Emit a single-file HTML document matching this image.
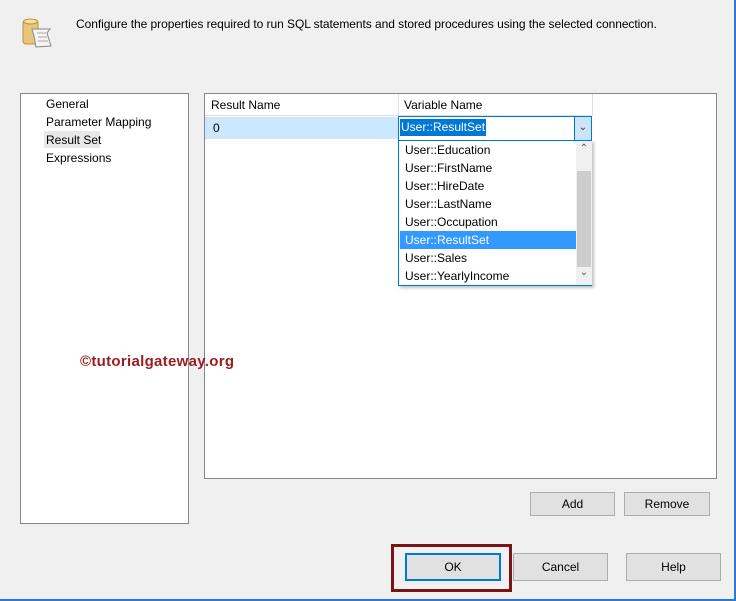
<!DOCTYPE html>
<html><head><style>
*{margin:0;padding:0;box-sizing:border-box}
body{width:736px;height:601px;background:#f0f0f0;font-family:"Liberation Sans",sans-serif;font-size:12px;color:#000;position:relative;overflow:hidden}
.a{position:absolute}
.btn{position:absolute;background:#e1e1e1;border:1px solid #adadad;text-align:center;font-size:12px}
.it{position:absolute;left:5px;height:18px;line-height:18px;width:172px;padding-left:1px}
</style></head><body>
<div class="a" style="right:0;top:0;width:2px;height:601px;background:#2b79d0"></div>
<div class="a" style="left:0;bottom:0;width:736px;height:2px;background:#2b79d0"></div>
<svg class="a" style="left:22px;top:18px" width="32" height="32" viewBox="0 0 32 32">
<rect x="1" y="2" width="15" height="24" rx="3" fill="#e8c679" stroke="#b8923e"/>
<ellipse cx="8.5" cy="3.5" rx="7" ry="2.5" fill="#f5dea0" stroke="#b8923e"/>
<path d="M10 11 L28 11 L25 15 L29 28 L14 29 L12 18 Z" fill="#f4f4f4" stroke="#888"/>
<path d="M15 15 L24 15 M16 19 L25 19 M16 23 L26 23" stroke="#aaa"/>
</svg>
<div class="a" style="left:76px;top:17px;font-size:12px;letter-spacing:-0.06px">Configure the properties required to run SQL statements and stored procedures using the selected connection.</div>
<div class="a" style="left:20px;top:93px;width:169px;height:431px;background:#fff;border:1px solid #828790"></div>
<div class="a" style="left:44px;top:131px;width:56px;height:17px;background:#e8e8e8"></div>
<div class="a" style="left:46px;top:95px;line-height:18px">General<br>Parameter Mapping<br>Result Set<br>Expressions</div>
<div class="a" style="left:204px;top:93px;width:513px;height:386px;background:#fff;border:1px solid #828790"></div>
<div class="a" style="left:205px;top:94px;width:388px;height:22px;border-bottom:1px solid #e0e0e0"></div>
<div class="a" style="left:398px;top:94px;width:1px;height:22px;background:#e0e0e0"></div>
<div class="a" style="left:592px;top:94px;width:1px;height:22px;background:#e0e0e0"></div>
<div class="a" style="left:211px;top:98px">Result Name</div>
<div class="a" style="left:404px;top:98px">Variable Name</div>
<div class="a" style="left:205px;top:117px;width:193px;height:22px;background:#cce8ff"></div>
<div class="a" style="left:213px;top:121px">0</div>
<div class="a" style="left:398px;top:116px;width:194px;height:25px;background:#fff;border:1px solid #0078d7"></div>
<div class="a" style="left:400px;top:119px;height:17px;background:#0078d7;color:#fff;line-height:17px;padding:0 1px;white-space:nowrap">User::ResultSet</div>
<div class="a" style="left:574px;top:117px;width:17px;height:23px;background:#cce4f7;border-left:1px solid #0078d7;text-align:center;line-height:22px;font-size:10px;color:#333">&#8964;</div>
<div class="a" style="left:398px;top:140px;width:194px;height:146px;background:#fff;border:1px solid #0078d7;box-shadow:2px 2px 3px rgba(0,0,0,.25)">
<div class="it" style="top:0">User::Education</div>
<div class="it" style="top:18px">User::FirstName</div>
<div class="it" style="top:36px">User::HireDate</div>
<div class="it" style="top:54px">User::LastName</div>
<div class="it" style="top:72px">User::Occupation</div>
<div class="it" style="top:90px;background:#3399ff;color:#fff;left:1px;padding-left:5px;width:176px">User::ResultSet</div>
<div class="it" style="top:108px">User::Sales</div>
<div class="it" style="top:126px">User::YearlyIncome</div>
<div class="a" style="left:177px;top:0;width:16px;height:144px;background:#f0f0f0"></div>
<div class="a" style="left:178px;top:30px;width:14px;height:96px;background:#cdcdcd"></div>
<div class="a" style="left:178px;top:2px;width:14px;font-size:10px;text-align:center;color:#555">&#8963;</div>
<div class="a" style="left:178px;top:126px;width:14px;font-size:10px;text-align:center;color:#555">&#8964;</div>
</div>
<div class="a" style="left:80px;top:353px;font-size:15px;font-weight:bold;color:#9b1c1c;letter-spacing:0.3px">©tutorialgateway.org</div>
<div class="btn" style="left:530px;top:492px;width:85px;height:24px;line-height:22px">Add</div>
<div class="btn" style="left:624px;top:492px;width:86px;height:24px;line-height:22px">Remove</div>
<div class="a" style="left:391px;top:544px;width:121px;height:48px;border:3px solid #7b1416"></div>
<div class="btn" style="left:405px;top:553px;width:96px;height:28px;line-height:24px;border:2px solid #0078d7">OK</div>
<div class="btn" style="left:513px;top:553px;width:95px;height:28px;line-height:26px">Cancel</div>
<div class="btn" style="left:626px;top:553px;width:95px;height:28px;line-height:26px">Help</div>
</body></html>
